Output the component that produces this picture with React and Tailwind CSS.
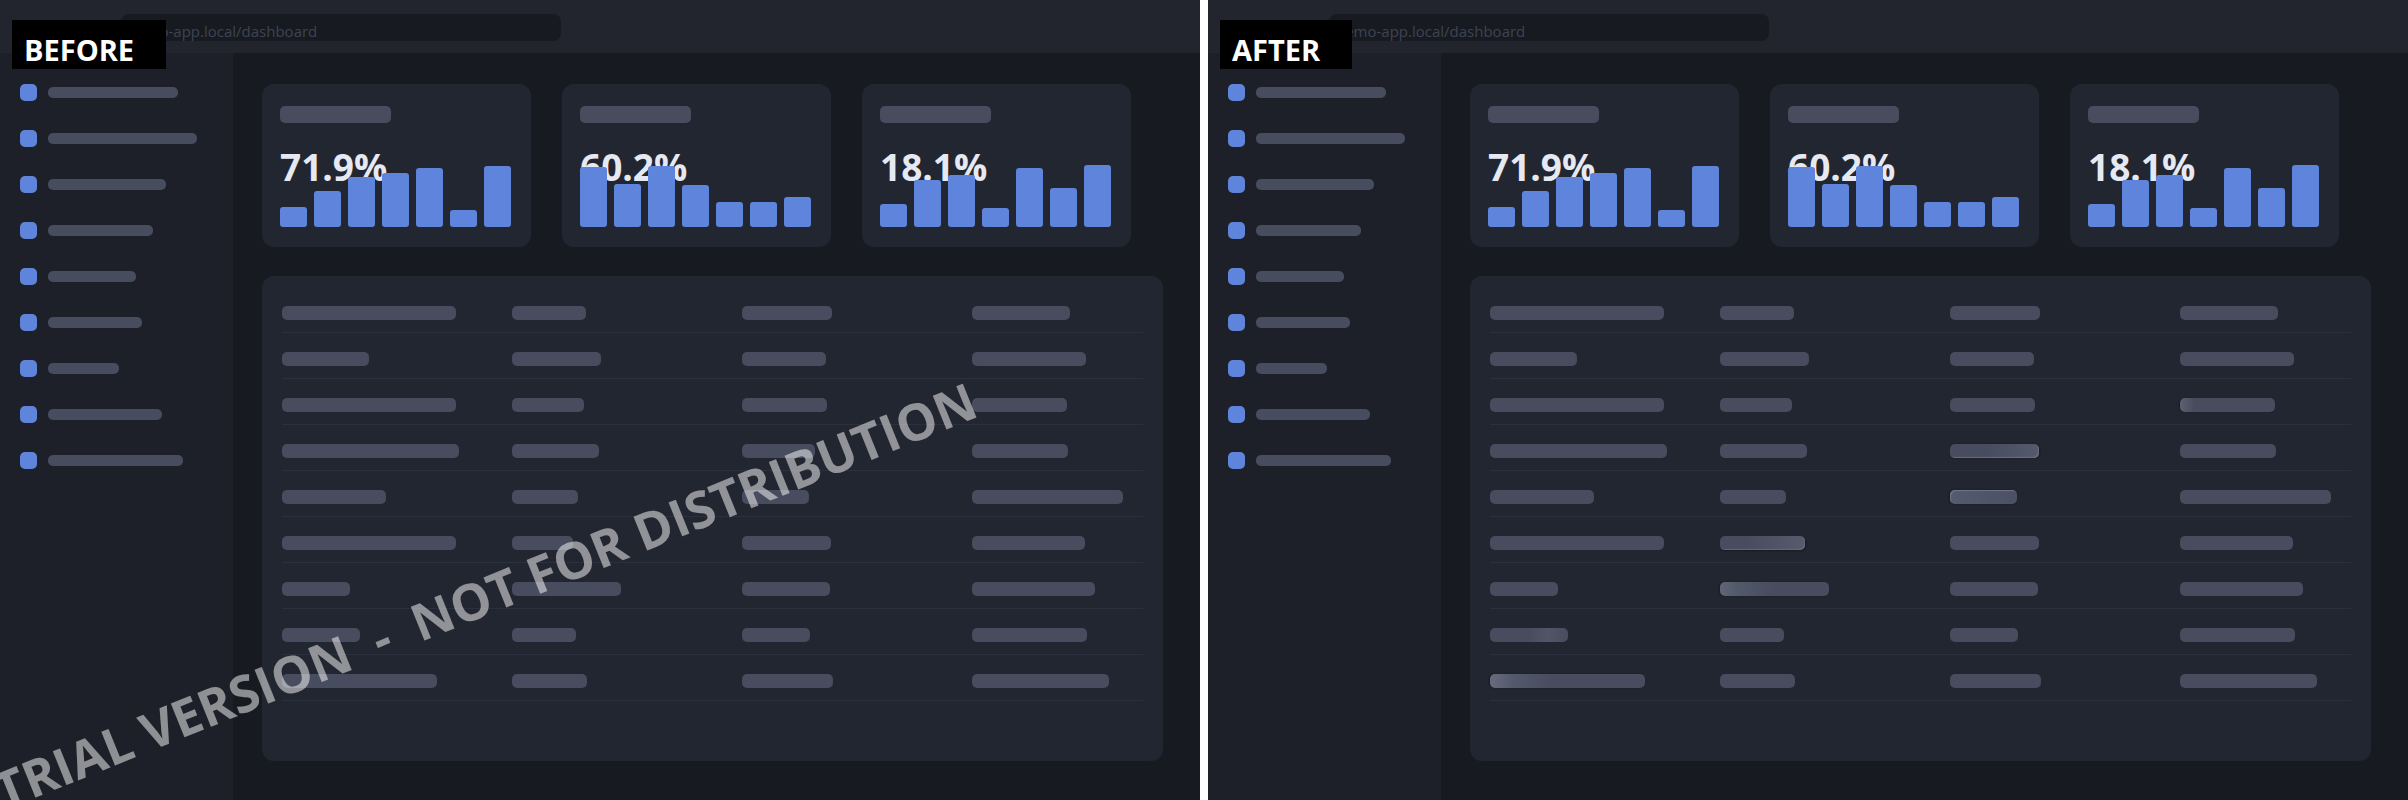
import clsx from 'clsx';

const NAV_WIDTHS = [130, 149, 118, 105, 88, 94, 71, 114, 135];

const CARDS = [
  { value: '71.9%', bars: [20, 36, 50, 54, 59, 17, 61] },
  { value: '60.2%', bars: [60, 43, 61, 42, 25, 25, 30] },
  { value: '18.1%', bars: [23, 47, 52, 19, 59, 39, 62] },
];

const ROWS = [
  [174, 74, 90, 98],
  [87, 89, 84, 114],
  [174, 72, 85, 95],
  [177, 87, 73, 96],
  [104, 66, 67, 151],
  [174, 61, 89, 113],
  [68, 109, 88, 123],
  [78, 64, 68, 115],
  [155, 75, 91, 137],
];

// cells where the removed watermark leaves a trace, keyed by "row-col"
const TRACES = {
  '2-3': { className: 'bg-linear-to-r from-[#5c6172] to-[#474c5e] to-15% shadow-[-1px_0_1px_#171a22]' },
  '3-2': { width: 89, className: 'bg-linear-to-r from-[#474c5e] from-40% to-[#545a6d] shadow-[1px_0_2px_#171a22] inset-shadow-[-1px_-1px_1px_#6a6f80]' },
  '4-2': { className: 'bg-linear-to-r from-[#555b6f] to-[#4b5064] shadow-[-1px_0_2px_#171a22] inset-shadow-[1px_1px_1px_#70758a]' },
  '5-1': { width: 85, className: 'bg-linear-to-r from-[#474c5e] from-30% to-[#565c6e] shadow-[1px_1px_2px_#171a22] inset-shadow-[-1px_-1px_1px_#646a7a]' },
  '6-1': { className: 'bg-linear-to-r from-[#616675] via-[#525a6b] via-15% to-[#474c5e] to-50% shadow-[-1px_0_2px_#171a22]' },
  '7-0': { className: 'bg-linear-to-r from-[#474c5e] from-50% via-[#505668] via-75% to-[#474c5e]' },
  '8-0': { className: 'bg-linear-to-r from-[#676c7d] via-[#525a6b] via-15% to-[#474c5e] to-40% shadow-[-1px_0_2px_#171a22]' },
};

function Sidebar() {
  return (
    <nav className="w-[233px] shrink-0 bg-[#1e2029] pl-5 pt-[31px]">
      <ul className="flex flex-col gap-[29px]">
        {NAV_WIDTHS.map((width, i) => (
          <li key={i} className="flex h-[17px] items-center gap-[11px]">
            <span className="size-[17px] rounded-[5px] bg-[#5f84dc]" />
            <span className="h-[11px] rounded-[5px] bg-[#474c5e]" style={{ width }} />
          </li>
        ))}
      </ul>
    </nav>
  );
}

function StatCard({ value, bars }) {
  return (
    <div className="relative h-[163px] rounded-xl bg-[#222630] px-[18px] pt-[22px]">
      <div className="h-[17px] w-[111px] rounded-[5px] bg-[#474c5e]" />
      <p className="mt-5 text-[37px] leading-[48px] font-bold text-[#e6e9f2]">{value}</p>
      <div className="absolute inset-x-[18px] bottom-5 flex items-end gap-[7px]">
        {bars.map((height, i) => (
          <span key={i} className="w-[27px] rounded-[3px] bg-[#5f84dc]" style={{ height }} />
        ))}
      </div>
    </div>
  );
}

function DataPanel({ cleaned }) {
  return (
    <div className="mt-[29px] rounded-xl bg-[#222630] px-5 pt-[11px] pb-[60px]">
      <table className="w-full table-fixed border-separate border-spacing-0">
        <colgroup>
          <col className="w-[230px]" />
          <col className="w-[230px]" />
          <col className="w-[230px]" />
          <col />
        </colgroup>
        <tbody>
          {ROWS.map((row, r) => (
            <tr key={r}>
              {row.map((width, c) => {
                const trace = cleaned ? TRACES[`${r}-${c}`] : null;
                return (
                  <td key={c} className="border-b border-[#2c303c] p-0 pt-[19px] pb-3">
                    <div
                      className={clsx('h-[14px] rounded-[5px]', trace ? trace.className : 'bg-[#474c5e]')}
                      style={{ width: trace?.width || width }}
                    />
                  </td>
                );
              })}
            </tr>
          ))}
        </tbody>
      </table>
    </div>
  );
}

function Dashboard({ label, cleaned = false }) {
  return (
    <section className="relative flex min-w-0 flex-1 flex-col overflow-hidden bg-[#181a21]">
      <header className="flex h-[53px] items-start bg-[#22252d] pt-[14px] pl-[121px]">
        <input
          type="text"
          readOnly
          aria-label="Address"
          value="demo-app.local/dashboard"
          className="h-[27px] w-[440px] rounded-lg bg-[#181a21] pt-[7px] pl-[7px] text-[15px] leading-[19px] text-[#3e4353] outline-none"
        />
      </header>

      <div className="flex flex-1">
        <Sidebar />
        <main className="min-w-0 flex-1 pt-[31px] pr-[37px] pb-[39px] pl-[29px]">
          <div className="grid grid-cols-3 gap-[31px] pr-8">
            {CARDS.map(card => <StatCard key={card.value} {...card} />)}
          </div>
          <DataPanel cleaned={cleaned} />
        </main>
      </div>

      {!cleaned && (
        <p className="pointer-events-none absolute -bottom-4 left-1.5 origin-bottom-left -rotate-22 text-[51px] leading-none font-bold whitespace-pre text-white/50">
          TRIAL VERSION  -  NOT FOR DISTRIBUTION
        </p>
      )}

      <h2 className="absolute top-5 left-3 h-[49px] bg-black pt-[11px] pr-8 pl-3 text-[29px] leading-[38px] font-bold text-white">
        {label}
      </h2>
    </section>
  );
}

export default function App() {
  return (
    <div className="flex min-h-screen gap-2 bg-white font-['Open_Sans','Noto_Sans',sans-serif]">
      <Dashboard label="BEFORE" />
      <Dashboard label="AFTER" cleaned />
    </div>
  );
}
